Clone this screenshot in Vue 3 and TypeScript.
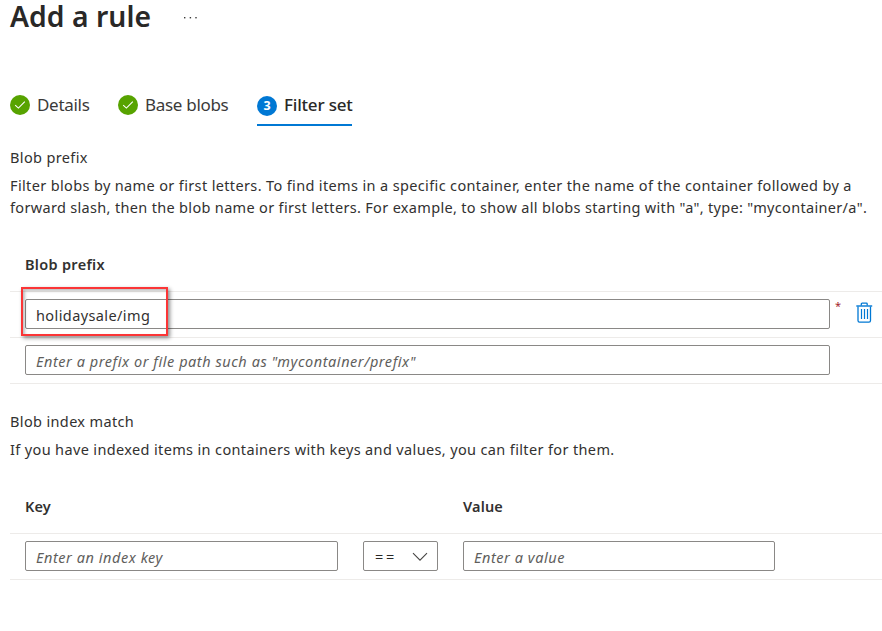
<script setup lang="ts">
import { ref } from 'vue'

interface Step {
  label: string
  done: boolean
  key: string
}

const steps: Step[] = [
  { label: 'Details', done: true, key: 'details' },
  { label: 'Base blobs', done: true, key: 'base' },
  { label: 'Filter set', done: false, key: 'filter' },
]

const prefix = ref('holidaysale/img')
const nextPrefix = ref('')
const indexKey = ref('')
const indexValue = ref('')
</script>

<template>
  <main class="page">
    <header class="title-bar">
      <h1>Add a rule</h1>
      <svg class="more" width="16" height="4" viewBox="0 0 16 4" fill="#3b3a39">
        <rect x="1" y="1" width="1.4" height="1.4" />
        <rect x="6.7" y="1" width="1.4" height="1.4" />
        <rect x="12.3" y="1" width="1.4" height="1.4" />
      </svg>
    </header>

    <nav class="steps">
      <div v-for="(step, i) in steps" :key="step.key" class="step" :class="[step.key, { active: !step.done }]">
        <svg v-if="step.done" class="mark" width="20" height="20" viewBox="0 0 20 20">
          <circle cx="10" cy="10" r="10" fill="#57a300" />
          <path d="M5.2 10.1 L8.4 13.1 L14.8 6.6" fill="none" stroke="#fff" stroke-width="1.1" />
        </svg>
        <span v-else class="mark number">{{ i + 1 }}</span>
        <span class="label">{{ step.label }}</span>
      </div>
    </nav>

    <section class="prefix-section">
      <h2>Blob prefix</h2>
      <p>
        <span class="line">Filter blobs by name or first letters. To find items in a specific container, enter the name of the container followed by a</span>
        <span class="line second">forward slash, then the blob name or first letters. For example, to show all blobs starting with "a", type: "mycontainer/a".</span>
      </p>
      <div class="table">
        <div class="head"><span>Blob prefix</span></div>
        <div class="row">
          <div class="wide">
            <input v-model="prefix" class="field" type="text" />
            <span class="callout"></span>
          </div>
          <span class="required">*</span>
          <button class="trash" aria-label="Delete">
            <svg width="17" height="22" viewBox="0 0 17 22" fill="none" stroke="#0078d4">
              <path d="M0.3 4H16.2" stroke-width="1.4" />
              <path d="M5.3 3.6V2Q5.3 1.2 6.1 1.2H10.4Q11.2 1.2 11.2 2V3.6" stroke-width="1.3" />
              <path d="M2 4.5V18.6Q2 20.2 3.5 20.2H13Q14.5 20.2 14.5 18.6V4.5" stroke-width="1.3" />
              <path d="M5.5 7V17M8.5 7V17M11.5 7V17" stroke-width="1.2" />
            </svg>
          </button>
        </div>
        <div class="row">
          <div class="wide">
            <input v-model="nextPrefix" class="field" type="text" placeholder='Enter a prefix or file path such as "mycontainer/prefix"' />
          </div>
        </div>
      </div>
    </section>

    <section class="index-section">
      <h2>Blob index match</h2>
      <p><span class="line">If you have indexed items in containers with keys and values, you can filter for them.</span></p>
      <div class="table">
        <div class="head narrow">
          <span class="h-key">Key</span>
          <span>Value</span>
        </div>
        <div class="row">
          <div class="key-cell"><input v-model="indexKey" class="field" type="text" placeholder="Enter an index key" /></div>
          <button class="operator">
            <span>==</span>
            <svg width="16" height="10" viewBox="0 0 16 10" fill="none" stroke="#484644" stroke-width="1.1">
              <path d="M1 1.2 L8 8.2 L15 1.2" />
            </svg>
          </button>
          <div class="value-cell"><input v-model="indexValue" class="field" type="text" placeholder="Enter a value" /></div>
        </div>
      </div>
    </section>
  </main>
</template>

<style>
body {
  background: #fff;
}
</style>

<style scoped>
.page {
  box-sizing: border-box;
  width: 882px;
  height: 631px;
  padding-left: 10px;
  background: #fff;
  color: #323130;
  font-family: "Noto Sans", "Open Sans", sans-serif;
  font-size: 14.5px;
  font-weight: 400;
  letter-spacing: 0.36px;
}
.title-bar {
  display: flex;
  align-items: center;
  height: 34px;
}
h1 {
  margin: 0 0 2px;
  width: 173px;
  font-size: 28.3px;
  line-height: 32px;
  font-weight: 600;
  letter-spacing: 0.05px;
  color: #292827;
  white-space: nowrap;
}
.more {
  margin-top: 2px;
}
.steps {
  display: flex;
  height: 92px;
  box-sizing: border-box;
  padding-top: 58px;
}
.step {
  display: flex;
  align-items: center;
  box-sizing: border-box;
  height: 34px;
  padding-bottom: 8px;
  font-size: 17px;
  letter-spacing: -0.3px;
  color: #3b3a39;
  white-space: nowrap;
}
.step.details { width: 108px; }
.step.base { width: 139px; }
.step.filter { width: 95px; }
.step.active {
  border-bottom: 2px solid #0078d4;
  font-weight: 500;
  letter-spacing: -0.2px;
  padding-bottom: 6px;
  color: #292827;
}
.label {
  line-height: 24px;
  margin-bottom: 1px;
}
.mark {
  flex: none;
  width: 20px;
  height: 20px;
  margin-right: 7px;
}
.number {
  margin-top: 2px;
  border-radius: 50%;
  background: #0078d4;
  color: #fff;
  font-size: 12.5px;
  font-weight: 700;
  line-height: 20px;
  letter-spacing: 0;
  text-align: center;
}
.prefix-section {
  height: 258px;
  padding-top: 20px;
}
h2 {
  margin: 0 0 6px;
  font-size: 14.5px;
  font-weight: 400;
  line-height: 22px;
}
p {
  margin: 0;
  line-height: 22px;
}
.line {
  display: block;
  width: max-content;
  white-space: nowrap;
}
.second {
  letter-spacing: 0.325px;
}
.head {
  display: flex;
  align-items: center;
  box-sizing: border-box;
  height: 73px;
  padding: 18px 0 0 15px;
  font-weight: 600;
  letter-spacing: 0.3px;
}
.head.narrow {
  letter-spacing: 0.15px;
}
.row {
  display: flex;
  box-sizing: border-box;
  height: 46px;
  padding: 7px 0 0 15px;
  border-top: 1px solid #edebe9;
}
.row:last-child {
  height: 47px;
  border-bottom: 1px solid #edebe9;
}
.wide {
  position: relative;
  width: 805px;
}
.field {
  display: block;
  box-sizing: border-box;
  width: 100%;
  height: 30px;
  margin: 0;
  padding: 1px 10px 0;
  border: 1px solid #8a8886;
  border-radius: 2px;
  outline: 0;
  background: #fff;
  color: #323130;
  font-family: inherit;
  font-size: 14.5px;
  font-weight: 400;
  letter-spacing: 0.4px;
}
.field::placeholder {
  color: #605e5c;
  font-style: italic;
  letter-spacing: 0.55px;
  opacity: 1;
}
.callout {
  position: absolute;
  left: -4px;
  top: -12px;
  box-sizing: border-box;
  width: 147px;
  height: 49px;
  border: 2px solid #fb3536;
  box-shadow: 2px 2px 4px rgba(0, 0, 0, 0.45), inset 2px 2px 3px rgba(0, 0, 0, 0.25);
}
.required {
  width: 26px;
  box-sizing: border-box;
  padding-left: 5px;
  font-size: 11px;
  line-height: 13px;
  color: #a4262c;
}
.trash {
  height: 22px;
  margin: 3px 0 0;
  padding: 0;
  border: 0;
  background: none;
}
.trash svg {
  display: block;
}
.index-section {
  padding-top: 6px;
}
.h-key {
  width: 438px;
}
.key-cell {
  width: 313px;
}
.operator {
  display: flex;
  align-items: center;
  justify-content: space-between;
  box-sizing: border-box;
  width: 75px;
  height: 30px;
  margin: 0 25px;
  padding: 2px 9px 0 11px;
  border: 1px solid #8a8886;
  border-radius: 2px;
  background: #fff;
  color: #292827;
  font-family: inherit;
  font-size: 14.5px;
  letter-spacing: 2.8px;
}
.operator span {
  margin-bottom: 2px;
}
.value-cell {
  width: 312px;
}
</style>
